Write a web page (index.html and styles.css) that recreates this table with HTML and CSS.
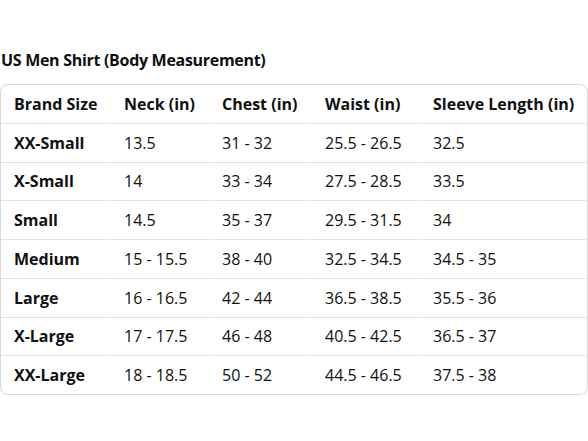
FILE: index.html
```html
<!DOCTYPE html>
<html>
<head>
<meta charset="utf-8">
<link rel="stylesheet" href="styles.css">
</head>
<body>
<div class="page">
  <h2 class="title">US Men Shirt (Body Measurement)</h2>
  <div class="card">
    <table class="chart">
      <thead>
        <tr><th class="c1">Brand Size</th><th class="c2">Neck (in)</th><th class="c3">Chest (in)</th><th class="c4">Waist (in)</th><th class="c5">Sleeve Length (in)</th></tr>
      </thead>
      <tbody>
        <tr><th>XX-Small</th><td>13.5</td><td>31 - 32</td><td>25.5 - 26.5</td><td>32.5</td></tr>
        <tr><th>X-Small</th><td>14</td><td>33 - 34</td><td>27.5 - 28.5</td><td>33.5</td></tr>
        <tr><th>Small</th><td>14.5</td><td>35 - 37</td><td>29.5 - 31.5</td><td>34</td></tr>
        <tr><th>Medium</th><td>15 - 15.5</td><td>38 - 40</td><td>32.5 - 34.5</td><td>34.5 - 35</td></tr>
        <tr><th>Large</th><td>16 - 16.5</td><td>42 - 44</td><td>36.5 - 38.5</td><td>35.5 - 36</td></tr>
        <tr><th>X-Large</th><td>17 - 17.5</td><td>46 - 48</td><td>40.5 - 42.5</td><td>36.5 - 37</td></tr>
        <tr class="last"><th>XX-Large</th><td>18 - 18.5</td><td>50 - 52</td><td>44.5 - 46.5</td><td>37.5 - 38</td></tr>
      </tbody>
    </table>
  </div>
</div>
</body>
</html>
```
FILE: styles.css
```css
html, body {
  margin: 0;
  padding: 0;
  background: #ffffff;
}
.page {
  padding-top: 48px;
  font-family: "Open Sans", "Noto Sans", sans-serif;
  color: #0f1111;
}
.title {
  margin: 0 0 12px 1px;
  font-size: 16px;
  font-weight: 700;
  line-height: 24px;
  letter-spacing: -0.3px;
}
.card {
  border: 1px solid #d5d9d9;
  border-radius: 8px;
  overflow: hidden;
  width: 586px;
}
.chart {
  border-collapse: separate;
  border-spacing: 1px 0;
  margin: 0 -1px;
  width: 588px;
  table-layout: fixed;
  font-size: 16px;
}
.chart th, .chart td {
  text-align: left;
  padding: 0 0 0 13px;
  height: 37.75px;
  border-bottom: 1px solid #dfe2e2;
  white-space: nowrap;
}
.chart th {
  font-weight: 700;
}
.chart td {
  font-weight: 400;
}
.chart tr.last th, .chart tr.last td {
  border-bottom: none;
}
.c1 { width: 96px; }
.c2 { width: 84px; }
.c3 { width: 89px; }
.c4 { width: 94px; }
.c5 { width: auto; }
```
